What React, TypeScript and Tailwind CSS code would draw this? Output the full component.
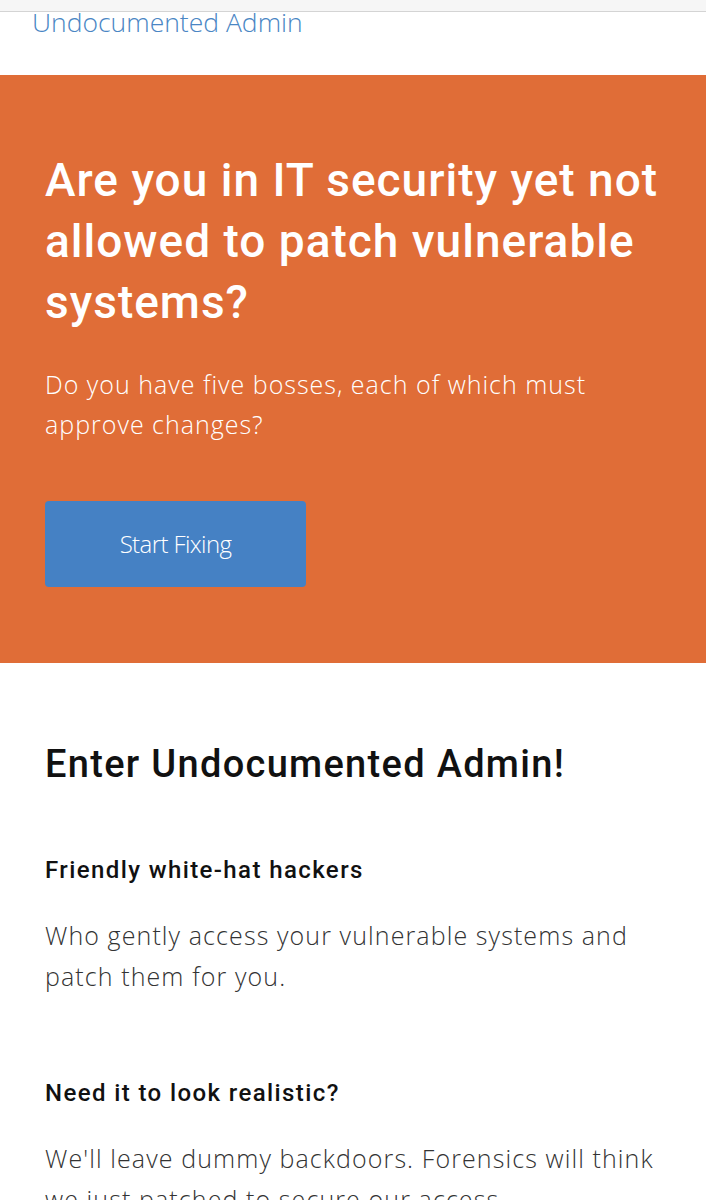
const SANS = "font-['Open_Sans','Lato',sans-serif]";
const HEAD = "font-['Roboto','Liberation_Sans',sans-serif]";

const FEATURES = [
  {
    title: "Friendly white-hat hackers",
    body: "Who gently access your vulnerable systems and patch them for you.",
  },
  {
    title: "Need it to look realistic?",
    body: "We'll leave dummy backdoors. Forensics will think we just patched to secure our access.",
  },
];

export default function App() {
  return (
    <div className="min-h-[1200px] bg-white overflow-hidden">
      {/* browser strip remnant */}
      <div className="h-[12px] bg-[#f6f6f6] border-b border-[#d4d4d4]" />

      <header className="h-[63px] px-[32px] flex items-start">
        <a
          href="#"
          className={`${SANS} block -mt-[7px] text-[26.5px] leading-[34px] font-light text-[#4a86c4]`}
        >
          Undocumented Admin
        </a>
      </header>

      <section className="bg-[#e06d37] h-[588px] pl-[45px] pr-[20px] pt-[75px]">
        <h1
          className={`${HEAD} text-[46px] leading-[61px] font-medium text-white tracking-[1px]`}
        >
          Are you in IT security yet not allowed to patch vulnerable systems?
        </h1>
        <p
          className={`${SANS} mt-[31px] text-[25px] leading-[40px] font-light text-white tracking-[1px] max-w-[580px]`}
        >
          Do you have five bosses, each of which must approve changes?
        </p>
        <button
          className={`${SANS} mt-[57px] w-[261px] h-[86px] rounded-[4px] bg-[#4581c4] text-white text-[24px] font-light tracking-[-0.6px]`}
        >
          Start Fixing
        </button>
      </section>

      <section className="pl-[45px] pr-[30px] pt-[78px]">
        <h2 className={`${HEAD} text-[38px] leading-[46px] font-medium text-[#111] tracking-[1.3px]`}>
          Enter Undocumented Admin!
        </h2>
        <div className="mt-[67px] flex flex-col gap-[80px]">
          {FEATURES.map((f) => (
            <div key={f.title}>
              <h3 className={`${HEAD} text-[24px] leading-[32px] font-medium text-[#111] tracking-[1.4px]`}>
                {f.title}
              </h3>
              <p
                className={`${SANS} mt-[29px] text-[25px] leading-[41px] font-light text-[#333] tracking-[1.1px] max-w-[625px]`}
              >
                {f.body}
              </p>
            </div>
          ))}
        </div>
      </section>
    </div>
  );
}
